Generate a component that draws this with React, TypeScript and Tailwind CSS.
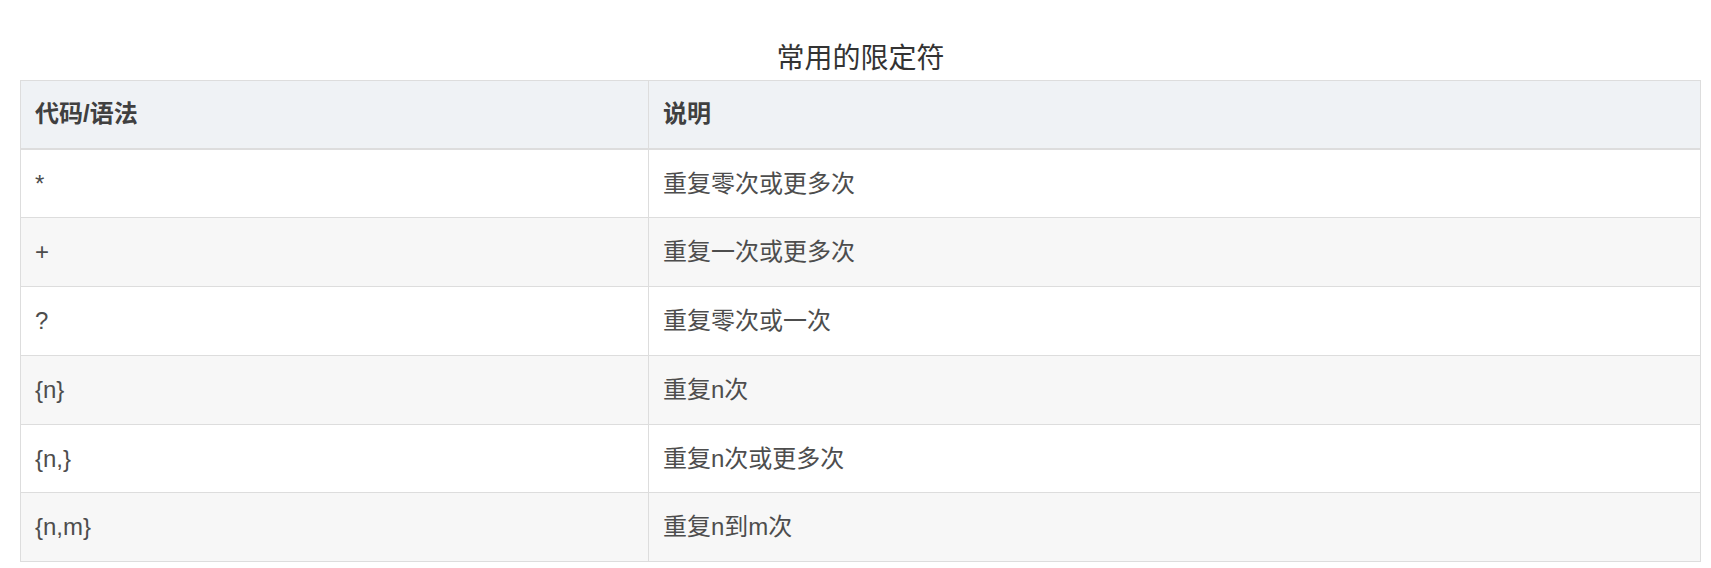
const rows = [
  { code: "*", desc: "重复零次或更多次" },
  { code: "+", desc: "重复一次或更多次" },
  { code: "?", desc: "重复零次或一次" },
  { code: "{n}", desc: "重复n次" },
  { code: "{n,}", desc: "重复n次或更多次" },
  { code: "{n,m}", desc: "重复n到m次" },
];

export default function App() {
  return (
    <div
      className="w-[1711px] h-[568px] bg-white pl-[20px] pr-[10px] pt-[37px] text-[#4d4d4d]"
      style={{ fontFamily: '"Liberation Sans", "Noto Sans CJK SC", sans-serif' }}
    >
      <div className="text-center text-[28px] leading-[43px] text-[#333]">常用的限定符</div>
      <table className="w-full border-collapse border border-[#dddddd] text-[24px]">
        <thead>
          <tr className="bg-[#eff2f5]">
            <th className="w-[628px] border border-b-2 border-[#dddddd] px-[14px] py-4 text-left font-bold leading-[34.7px] text-[#404040]">
              代码/语法
            </th>
            <th className="border border-b-2 border-[#dddddd] px-[14px] py-4 text-left font-bold leading-[34.7px] text-[#404040]">
              说明
            </th>
          </tr>
        </thead>
        <tbody>
          {rows.map((r, i) => (
            <tr key={r.code} className={i % 2 === 1 ? "bg-[#f7f7f7]" : "bg-white"}>
              <td className="border border-[#dddddd] px-[14px] py-4 leading-[35.7px]">{r.code}</td>
              <td className="border border-[#dddddd] px-[14px] py-4 leading-[35.7px]">{r.desc}</td>
            </tr>
          ))}
        </tbody>
      </table>
    </div>
  );
}
